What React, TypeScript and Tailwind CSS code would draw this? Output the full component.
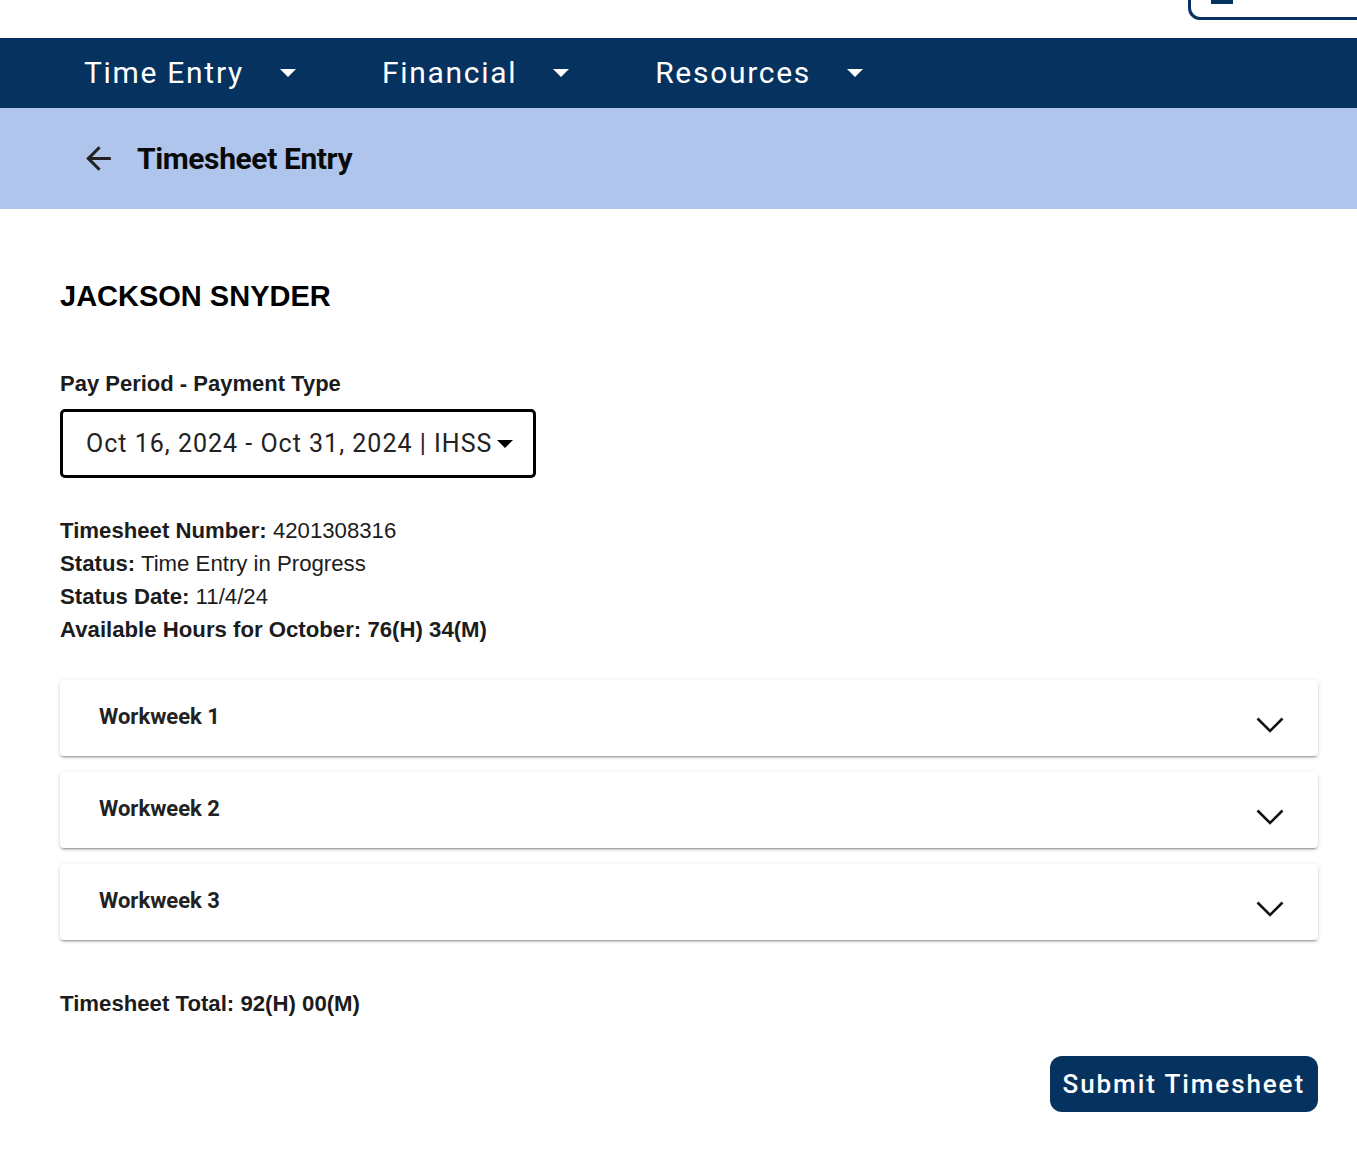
import React from 'react'

const navItems = ['Time Entry', 'Financial', 'Resources']
const weeks = ['Workweek 1', 'Workweek 2', 'Workweek 3']

function Caret({ className }: { className: string }) {
   return (
      <svg width="16" height="8" viewBox="0 0 16 8" className={className} aria-hidden="true">
         <path d="M0 0h16L8 8z" fill="currentColor" />
      </svg>
   )
}

function Chevron() {
   return (
      <svg width="28" height="16" viewBox="0 0 28 16" aria-hidden="true">
         <polyline points="1.5,1.5 14,14 26.5,1.5" fill="none" stroke="#111" strokeWidth="2.6" />
      </svg>
   )
}

export default function App() {
   return (
      <div className="min-h-[1176px] bg-white font-['Roboto',sans-serif] text-[#111]">
         {/* top strip with account button scrolled partly out of view */}
         <div className="h-[38px] flex justify-end overflow-hidden">
            <div className="-mt-[30px] -mr-[31px] h-[50px] w-[200px] shrink-0 border-[3px] border-[#06325f] rounded-bl-[12px] flex items-end pl-[20px] pb-[13px] gap-2 text-[#06325f] text-[28px] tracking-[2px]">
               <span className="block w-[22px] h-[22px] border-b-[4px] border-[#06325f]" />
               <span className="leading-none">Account</span>
            </div>
         </div>

         <nav className="h-[70px] bg-[#06325f] flex items-center pl-[84px] text-white">
            {navItems.map((item, i) => (
               <div key={item} className={`flex items-center ${i > 0 ? 'ml-[86px]' : ''}`}>
                  <span className="text-[30px] tracking-[1.7px] leading-none">{item}</span>
                  <Caret className="ml-[36px] text-white" />
               </div>
            ))}
         </nav>

         <div className="h-[101px] bg-[#b0c5ec] flex items-center pl-[80px]">
            <svg width="37" height="37" viewBox="0 0 24 24" aria-hidden="true">
               <path d="M20 11H7.83l5.59-5.59L12 4l-8 8 8 8 1.41-1.41L7.83 13H20z" fill="#222" />
            </svg>
            <h1 className="ml-[20px] text-[30px] font-bold tracking-[-0.4px] text-[#0a0a0a]">Timesheet Entry</h1>
         </div>

         <main className="pl-[60px] pr-[39px] pt-[70px] pb-[60px] font-['Liberation_Sans',Arial,sans-serif] text-[#1c1c1c]">
            <h2 className="text-[29px] leading-[35px] font-bold text-black">JACKSON SNYDER</h2>

            <label className="block mt-[58px] text-[22px] leading-[24px] font-bold">Pay Period - Payment Type</label>
            <div className="mt-[13px] w-[476px] h-[69px] border-[3px] border-black rounded-[5px] flex items-center pl-[23px] font-['Roboto',sans-serif] text-[25px] tracking-[1px] text-[#222]">
               <span>Oct 16, 2024 - Oct 31, 2024 | IHSS</span>
               <Caret className="ml-[5px] text-black" />
            </div>

            <div className="mt-[36px] text-[22.2px] leading-[33px]">
               <p><b>Timesheet Number:</b> 4201308316</p>
               <p><b>Status:</b> Time Entry in Progress</p>
               <p><b>Status Date:</b> 11/4/24</p>
               <p className="font-bold">Available Hours for October: 76(H) 34(M)</p>
            </div>

            <div className="mt-[34px] flex flex-col gap-4">
               {weeks.map((w) => (
                  <div
                     key={w}
                     className="h-[76px] bg-white rounded-[4px] flex items-center justify-between pl-[39px] pr-[34px] shadow-[0px_3px_1px_-2px_rgba(0,0,0,0.2),0px_2px_2px_0px_rgba(0,0,0,0.14),0px_1px_5px_0px_rgba(0,0,0,0.12)]"
                  >
                     <span className="-mt-[3px] font-['Roboto',sans-serif] font-bold text-[22px] text-[#222]">{w}</span>
                     <span className="mt-[14px]"><Chevron /></span>
                  </div>
               ))}
            </div>

            <p className="mt-[52px] text-[22.2px] leading-[24px] font-bold">Timesheet Total: 92(H) 00(M)</p>

            <div className="mt-[40px] flex justify-end">
               <button className="h-[56px] px-[13px] rounded-[12px] bg-[#06325f] text-white font-['Roboto',sans-serif] font-medium text-[26px] tracking-[1.9px]">
                  Submit Timesheet
               </button>
            </div>
         </main>
      </div>
   )
}
